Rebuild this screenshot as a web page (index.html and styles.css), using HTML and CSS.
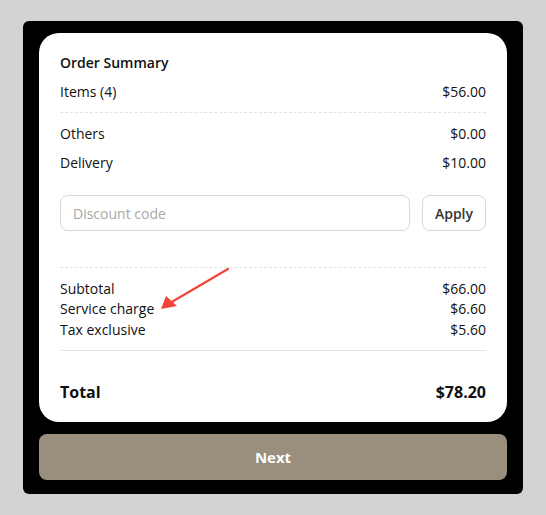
FILE: index.html
```html
<!DOCTYPE html>
<html lang="en">
<head>
    <meta charset="UTF-8">
    <meta name="viewport" content="width=device-width, initial-scale=1.0">
    <title>Order Summary</title>
    <link rel="stylesheet" href="styles.css">
</head>
<body>
    <div class="panel">
        <div class="summary-card">
            <h3 class="title">Order Summary</h3>
            <div class="row"><span>Items (4)</span><span>$56.00</span></div>
            <hr class="dashed first">
            <div class="row"><span>Others</span><span>$0.00</span></div>
            <div class="row delivery"><span>Delivery</span><span>$10.00</span></div>

            <form class="discount" onsubmit="return false">
                <input type="text" class="discount-input" placeholder="Discount code">
                <button type="button" class="apply-button">Apply</button>
            </form>

            <hr class="dashed">
            <div class="charges">
                <div class="row tight"><span>Subtotal</span><span>$66.00</span></div>
                <div class="row tight"><span>Service charge</span><span>$6.60</span></div>
                <div class="row tight"><span>Tax exclusive</span><span>$5.60</span></div>
                <svg class="arrow" width="72" height="46" viewBox="0 0 72 46">
                    <line x1="68" y1="2" x2="10" y2="36" stroke="#f2453a" stroke-width="2.2" stroke-linecap="round"/>
                    <polygon points="1,42 6,29 17,39" fill="#f2453a"/>
                </svg>
            </div>
            <hr class="solid">
            <div class="row total"><span>Total</span><span>$78.20</span></div>
        </div>
        <button class="next-button">Next</button>
    </div>
</body>
</html>
```

FILE: styles.css
```css
body { margin: 0; background: #d3d3d3; font-family: "Open Sans", "Noto Sans", sans-serif; color: #111; }
.panel { width: 468px; margin: 21px 0 0 23px; padding: 12px 16px 14px; background: #000; border-radius: 6px; }
.summary-card { background: #fff; border-radius: 20px; padding: 20px 21px 19px; }
.title { margin: 0 0 9px; font-size: 14px; font-weight: 600; line-height: 20px; }
.row { display: flex; justify-content: space-between; font-size: 14px; line-height: 20px; }
.dashed { border: none; border-top: 1px dashed #e2e2e2; margin: 10px 0 11px; }
.delivery { margin-top: 9px; }
.discount { display: flex; gap: 12px; margin-top: 22px; }
.discount-input { flex: 1; height: 36px; box-sizing: border-box; border: 1px solid #d5d8de; border-radius: 8px; padding: 0 12px; font: inherit; font-size: 14px; }
.discount-input::placeholder { color: #a8a8a8; }
.apply-button { height: 36px; padding: 0 12px; background: #fff; border: 1px solid #d5d8de; border-radius: 8px; font: inherit; font-size: 14px; font-weight: 600; color: #333; }
.discount + .dashed { margin-top: 36px; }
.charges { position: relative; }
.tight { line-height: 20.4px; }
.arrow { position: absolute; left: 100px; top: -12px; }
.solid { border: none; border-top: 1px solid #e2e4e8; margin: 10px 0 30px; }
.total { font-size: 16px; font-weight: 700; line-height: 22px; }
.next-button { display: block; width: 100%; height: 46px; margin-top: 12px; border: none; border-radius: 8px; background: #9a8e7c; color: #fff; font: inherit; font-size: 15px; font-weight: 700; }
```
